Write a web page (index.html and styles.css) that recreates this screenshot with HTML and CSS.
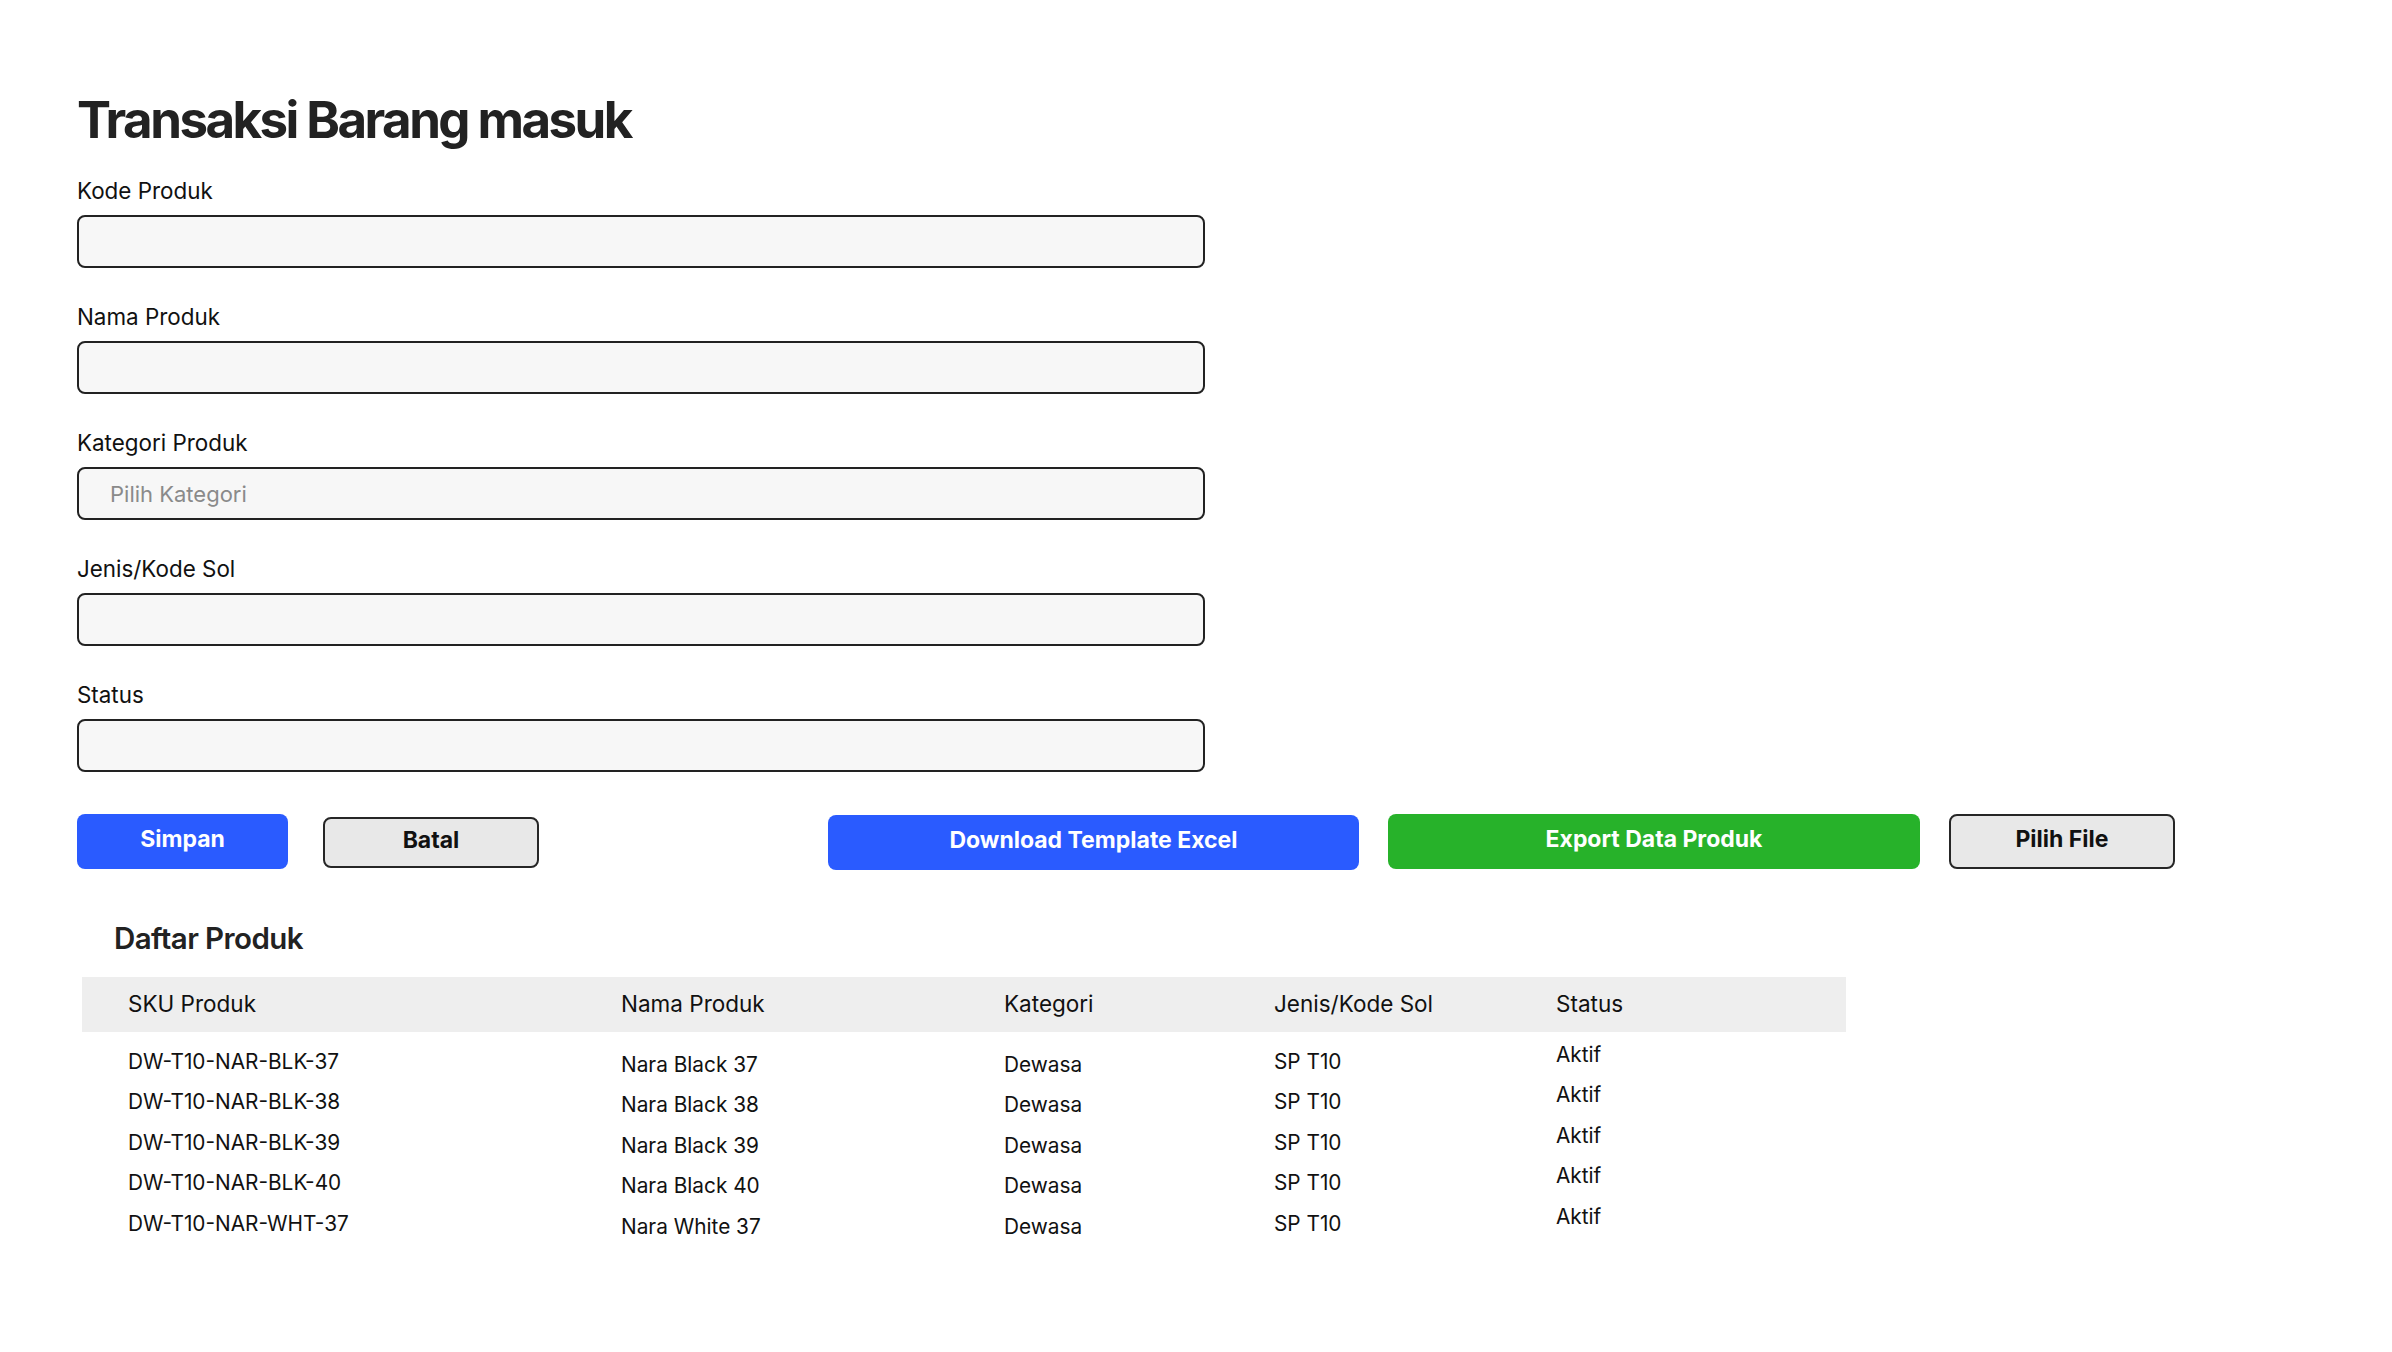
FILE: index.html
```html
<!DOCTYPE html>
<html lang="id">
<head>
<meta charset="utf-8">
<title>Transaksi Barang masuk</title>
<link rel="stylesheet" href="styles.css">
</head>
<body>
<main class="page">
  <h1 class="title">Transaksi Barang masuk</h1>
  <form class="form">
    <div class="field">
      <label class="label">Kode Produk</label>
      <input class="input" type="text">
    </div>
    <div class="field">
      <label class="label">Nama Produk</label>
      <input class="input" type="text">
    </div>
    <div class="field">
      <label class="label">Kategori Produk</label>
      <input class="input" type="text" placeholder="Pilih Kategori">
    </div>
    <div class="field">
      <label class="label">Jenis/Kode Sol</label>
      <input class="input" type="text">
    </div>
    <div class="field">
      <label class="label">Status</label>
      <input class="input" type="text">
    </div>
  </form>
  <div class="actions">
    <button class="btn btn-blue btn-simpan" type="button">Simpan</button>
    <button class="btn btn-gray btn-batal" type="button">Batal</button>
    <button class="btn btn-blue btn-download" type="button">Download Template Excel</button>
    <button class="btn btn-green btn-export" type="button">Export Data Produk</button>
    <button class="btn btn-gray btn-file" type="button">Pilih File</button>
  </div>
  <section class="list">
    <h2 class="list-title">Daftar Produk</h2>
    <div class="table">
      <div class="thead">
        <div class="th">SKU Produk</div>
        <div class="th">Nama Produk</div>
        <div class="th">Kategori</div>
        <div class="th">Jenis/Kode Sol</div>
        <div class="th">Status</div>
      </div>
      <div class="tbody">
        <div class="tr">
          <div class="td">DW-T10-NAR-BLK-37</div>
          <div class="td td-low">Nara Black 37</div>
          <div class="td td-low">Dewasa</div>
          <div class="td">SP T10</div>
          <div class="td td-high">Aktif</div>
        </div>
        <div class="tr">
          <div class="td">DW-T10-NAR-BLK-38</div>
          <div class="td td-low">Nara Black 38</div>
          <div class="td td-low">Dewasa</div>
          <div class="td">SP T10</div>
          <div class="td td-high">Aktif</div>
        </div>
        <div class="tr">
          <div class="td">DW-T10-NAR-BLK-39</div>
          <div class="td td-low">Nara Black 39</div>
          <div class="td td-low">Dewasa</div>
          <div class="td">SP T10</div>
          <div class="td td-high">Aktif</div>
        </div>
        <div class="tr">
          <div class="td">DW-T10-NAR-BLK-40</div>
          <div class="td td-low">Nara Black 40</div>
          <div class="td td-low">Dewasa</div>
          <div class="td">SP T10</div>
          <div class="td td-high">Aktif</div>
        </div>
        <div class="tr">
          <div class="td">DW-T10-NAR-WHT-37</div>
          <div class="td td-low">Nara White 37</div>
          <div class="td td-low">Dewasa</div>
          <div class="td">SP T10</div>
          <div class="td td-high">Aktif</div>
        </div>
      </div>
    </div>
  </section>
</main>
</body>
</html>
```
FILE: styles.css
```css
* { box-sizing: border-box; }

html, body {
  margin: 0;
  padding: 0;
  background: #ffffff;
}

body {
  font-family: Inter, "Noto Sans", "Liberation Sans", sans-serif;
  color: #111111;
}

.page {
  padding: 94px 0 0 77px;
}

.title {
  margin: 0;
  font-size: 51px;
  line-height: 52px;
  font-weight: 700;
  letter-spacing: -0.05em;
  color: #222222;
}

.form {
  margin-top: 31px;
  width: 1128px;
}

.field {
  display: flex;
  flex-direction: column;
}

.field + .field {
  margin-top: 35px;
}

.label {
  font-size: 22.4px;
  line-height: 28px;
  color: #111111;
}

.input {
  margin-top: 10px;
  height: 53px;
  width: 100%;
  border: 2px solid #222222;
  border-radius: 8px;
  background: #f7f7f7;
  padding: 0 31px;
  font-family: inherit;
  font-size: 22px;
  color: #111111;
  outline: none;
}

.input::placeholder {
  color: #8a8a8a;
}

.actions {
  display: flex;
  align-items: flex-start;
  margin-top: 42px;
}

.btn {
  height: 55px;
  border-radius: 8px;
  font-family: inherit;
  font-size: 23px;
  font-weight: 700;
  padding: 0 0 5px;
  cursor: pointer;
}

.btn-blue {
  background: #2a5bff;
  color: #ffffff;
  border: none;
}

.btn-green {
  background: #27b22a;
  color: #ffffff;
  border: none;
}

.btn-gray {
  background: #e8e8e8;
  color: #111111;
  border: 2px solid #262626;
}

.btn-simpan { width: 211px; }

.btn-batal {
  width: 216px;
  height: 51px;
  margin-top: 3px;
  margin-left: 35px;
}

.btn-download {
  width: 531px;
  margin-top: 1px;
  margin-left: 289px;
}

.btn-export {
  width: 532px;
  margin-left: 29px;
}

.btn-file {
  width: 226px;
  margin-left: 29px;
}

.list {
  margin-top: 50px;
}

.list-title {
  margin: 0 0 0 37px;
  font-size: 29.5px;
  line-height: 36px;
  font-weight: 600;
  letter-spacing: -0.02em;
  color: #222222;
}

.table {
  margin-top: 21px;
  margin-left: 5px;
  width: 1764px;
}

.thead,
.tr {
  display: grid;
  grid-template-columns: 493px 383px 270px 282px 1fr;
  padding-left: 46px;
}

.thead {
  background: #eeeeee;
  height: 55px;
  align-items: center;
  padding-bottom: 2px;
}

.th {
  font-size: 22.5px;
  line-height: 28px;
  color: #111111;
}

.tbody {
  padding-top: 10px;
}

.tr {
  height: 40.4px;
  align-items: start;
}

.td {
  font-size: 20.8px;
  line-height: 40px;
  color: #111111;
}

.td-low { margin-top: 3px; }
.td-high { margin-top: -7px; }
```
